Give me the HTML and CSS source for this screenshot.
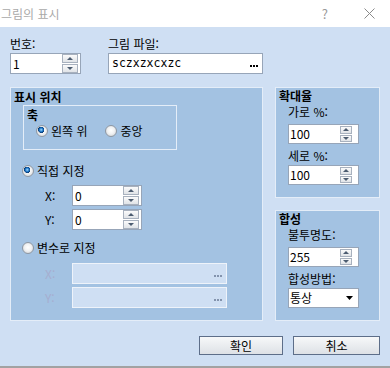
FILE: index.html
```html
<!DOCTYPE html>
<html lang="ko">
<head>
<meta charset="utf-8">
<link rel="stylesheet" href="styles.css">
</head>
<body>
<div class="titlebar">
  <span class="title">그림의 표시</span>
  <span class="help">?</span>
  <svg class="close" width="11" height="11" viewBox="0 0 11 11"><path d="M0.5 0.5L10.5 10.5M10.5 0.5L0.5 10.5" stroke="#8a8a8a" stroke-width="1" fill="none"/></svg>
</div>
<div class="dialog">
  <div class="top-row">
    <div class="field f-num">
      <div class="lbl">번호:</div>
      <div class="box"><span class="val">1</span><span class="spin"><i class="up"></i><i class="down"></i></span></div>
    </div>
    <div class="field f-file">
      <div class="lbl">그림 파일:</div>
      <div class="box"><span class="val mono">sczxzxcxzc</span><svg class="dots" width="8" height="2" viewBox="0 0 8 2"><rect x="0" y="0" width="2" height="2" fill="#000"/><rect x="3" y="0" width="2" height="2" fill="#000"/><rect x="6" y="0" width="2" height="2" fill="#000"/></svg></div>
    </div>
  </div>

  <div class="main">
    <section class="grp pos">
      <div class="gtitle">표시 위치</div>
      <div class="axis">
        <div class="atitle">축</div>
        <div class="axis-radios">
          <div class="radio"><span class="rb on"></span>왼쪽 위</div>
          <div class="radio"><span class="rb"></span>중앙</div>
        </div>
      </div>
      <div class="radio r-direct"><span class="rb on"></span>직접 지정</div>
      <div class="xy xy-first">
        <span class="xl">X:</span>
        <div class="box w70"><span class="val">0</span><span class="spin"><i class="up"></i><i class="down"></i></span></div>
      </div>
      <div class="xy">
        <span class="xl">Y:</span>
        <div class="box w70"><span class="val">0</span><span class="spin"><i class="up"></i><i class="down"></i></span></div>
      </div>
      <div class="radio r-var"><span class="rb"></span>변수로 지정</div>
      <div class="xy xy-var">
        <span class="xl dis-l">X:</span>
        <div class="box dis w155"><span class="val"></span><svg class="dots" width="8" height="2" viewBox="0 0 8 2"><rect x="0" y="0" width="2" height="2" fill="#8393ad"/><rect x="3" y="0" width="2" height="2" fill="#8393ad"/><rect x="6" y="0" width="2" height="2" fill="#8393ad"/></svg></div>
      </div>
      <div class="xy">
        <span class="xl dis-l">Y:</span>
        <div class="box dis w155"><span class="val"></span><svg class="dots" width="8" height="2" viewBox="0 0 8 2"><rect x="0" y="0" width="2" height="2" fill="#8393ad"/><rect x="3" y="0" width="2" height="2" fill="#8393ad"/><rect x="6" y="0" width="2" height="2" fill="#8393ad"/></svg></div>
      </div>
    </section>

    <div class="side">
      <section class="grp small">
        <div class="gtitle">확대율</div>
        <div class="slbl">가로 %:</div>
        <div class="box sbox first"><span class="val">100</span><span class="spin narrow"><i class="up"></i><i class="down"></i></span></div>
        <div class="slbl second">세로 %:</div>
        <div class="box sbox"><span class="val">100</span><span class="spin narrow"><i class="up"></i><i class="down"></i></span></div>
      </section>
      <section class="grp small">
        <div class="gtitle">합성</div>
        <div class="slbl">불투명도:</div>
        <div class="box sbox first"><span class="val">255</span><span class="spin narrow"><i class="up"></i><i class="down"></i></span></div>
        <div class="slbl second">합성방법:</div>
        <div class="box sbox"><span class="val">통상</span><svg class="caret" width="7" height="4" viewBox="0 0 7 4"><polygon points="0,0 7,0 3.5,4" fill="#000"/></svg></div>
      </section>
    </div>
  </div>

  <div class="buttons">
    <button class="btn ok">확인</button>
    <button class="btn cancel">취소</button>
  </div>
</div>
</body>
</html>
```

FILE: styles.css
```css
html, body {
  margin: 0;
  padding: 0;
}
body {
  width: 390px;
  height: 368px;
  overflow: hidden;
  font-family: "Noto Sans CJK KR", "Noto Sans", sans-serif;
  font-size: 12px;
  color: #000;
  background: #cfdff3;
}

/* title bar */
.titlebar {
  height: 27px;
  background: #fff;
  display: flex;
  align-items: center;
}
.title {
  margin-left: 1px;
  color: #a9a9a9;
  line-height: 16px;
}
.help {
  margin-left: auto;
  color: #9a9a9a;
  font-size: 13px;
  line-height: 16px;
}
.close {
  margin-left: 36px;
  margin-right: 15px;
  display: block;
}

/* dialog body */
.dialog {
  height: 341px;
  box-sizing: border-box;
  padding: 8px 10px 0 10px;
  background: #cfdff3;
  border-bottom: 2px solid #a2a2a2;
}
.top-row {
  display: flex;
  gap: 27px;
}
.f-num { width: 71px; }
.f-file { width: 155px; }
.lbl {
  height: 18px;
  line-height: 17px;
}

.box {
  height: 21px;
  box-sizing: border-box;
  border: 1px solid #97a5b8;
  background: #fff;
  display: flex;
  align-items: center;
}
.val {
  flex: 1;
  padding-left: 2px;
  line-height: 19px;
  white-space: nowrap;
}
.mono {
  font-family: "DejaVu Sans Mono", "Liberation Mono", monospace;
  font-size: 11.5px;
  padding-left: 3px;
}
.dots {
  display: block;
  margin-right: 4px;
  margin-top: 5px;
}

.spin {
  align-self: stretch;
  display: flex;
  flex-direction: column;
  gap: 1px;
  padding-right: 2px;
}
.spin i {
  flex: 1;
  width: 16px;
  box-sizing: border-box;
  border: 1px solid #a8b1be;
  background: linear-gradient(#fbfbfb, #e0e3e7);
  display: flex;
  align-items: center;
  justify-content: center;
}
.spin i::after {
  content: "";
  border-left: 3px solid transparent;
  border-right: 3px solid transparent;
}
.spin .up::after { border-bottom: 3px solid #4c5c70; }
.spin .down::after { border-top: 3px solid #4c5c70; }
.spin.narrow {
  padding: 1px 6px 1px 0;
}
.spin.narrow i { width: 12px; }

/* main area */
.main {
  display: flex;
  gap: 12px;
  margin-top: 13px;
}
.grp {
  background: #a3c2e2;
  border: 1px solid #e4edf8;
  box-sizing: border-box;
}
.gtitle {
  font-weight: bold;
  line-height: 16px;
  padding-left: 3px;
}
.pos {
  width: 253px;
  height: 234px;
}
.pos > .gtitle {
  padding-top: 1px;
}

.axis {
  margin-left: 12px;
  width: 154px;
  height: 45px;
  box-sizing: border-box;
  border: 1px solid #e4edf8;
}
.atitle {
  font-weight: bold;
  line-height: 16px;
  padding: 1px 0 0 3px;
}
.axis-radios {
  display: flex;
  gap: 18px;
  padding-left: 12px;
}

.radio {
  display: flex;
  align-items: center;
  gap: 3px;
  line-height: 16px;
}
.rb {
  width: 12px;
  height: 12px;
  box-sizing: border-box;
  border-radius: 50%;
  border: 1px solid #8f98a3;
  background: radial-gradient(circle at 50% 45%, #ffffff 0, #f1f2f3 45%, #c6cacf 100%);
  flex: none;
}
.rb.on {
  background:
    radial-gradient(circle at 42% 38%, #a9dcff 0, #2a84d0 1.6px, #0d4f98 2.6px, #0a3a70 3px, transparent 3.3px),
    radial-gradient(circle at 50% 45%, #ffffff 0, #f1f2f3 45%, #c6cacf 100%);
}
.r-direct {
  margin: 13px 0 0 11px;
}
.r-var {
  margin: 10px 0 0 11px;
}

.xy {
  display: flex;
  align-items: center;
  margin: 3px 0 0 34px;
}
.xy-first { margin-top: 6px; }
.xy-var { margin-top: 7px; }
.xl {
  width: 27px;
  line-height: 16px;
}
.dis-l { color: #a6aed0; }
.w70 { width: 70px; }
.w155 { width: 155px; }
.box.dis {
  background: #cfdff3;
  border-color: #eef3fa;
}

/* right column */
.side {
  width: 105px;
  display: flex;
  flex-direction: column;
  gap: 12px;
}
.small {
  height: 111px;
}
.slbl {
  padding-left: 12px;
  line-height: 16px;
}
.slbl.second {
  margin-top: 4px;
}
.sbox {
  margin-left: 12px;
  width: 71px;
  height: 20px;
  margin-top: 1px;
}
.sbox.first {
  margin-top: 4px;
}
.sbox .val {
  padding-left: 1px;
  line-height: 18px;
}
.caret {
  display: block;
  margin-right: 5px;
}

/* buttons */
.buttons {
  display: flex;
  justify-content: flex-end;
  gap: 10px;
  margin-top: 15px;
}
.btn {
  height: 19px;
  box-sizing: border-box;
  border: 1px solid #5d6e89;
  border-radius: 0;
  background: linear-gradient(#f7f8f9, #dde1e6);
  font-family: "Noto Sans CJK KR", "Noto Sans", sans-serif;
  font-size: 12px;
  line-height: 15px;
  padding: 0;
  color: #000;
}
.ok { width: 84px; }
.cancel { width: 87px; }
```
